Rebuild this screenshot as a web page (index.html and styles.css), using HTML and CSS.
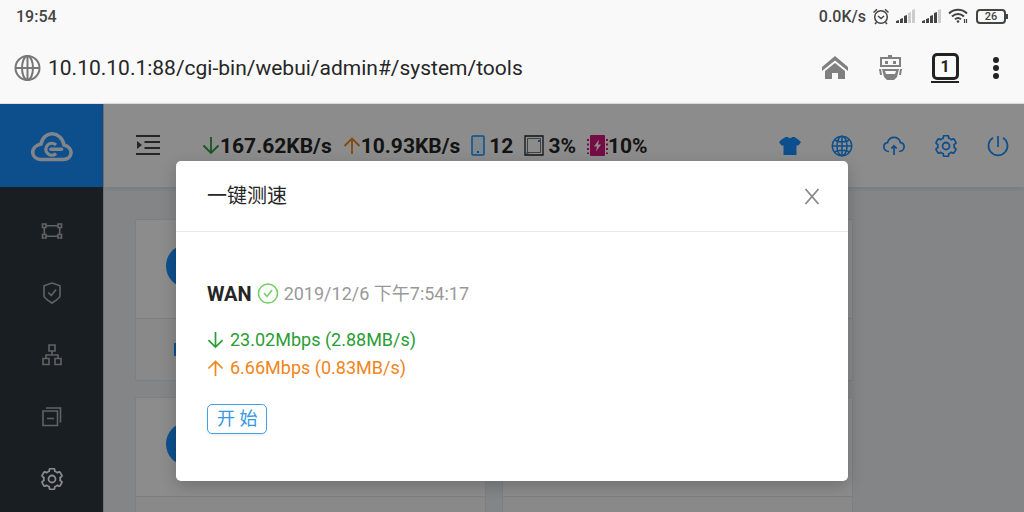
FILE: index.html
```html
<!DOCTYPE html>
<html lang="zh-CN">
  <head>
    <meta charset="UTF-8" />
    <meta name="viewport" content="width=device-width, initial-scale=1.0" />
    <title>一键测速</title>
    <link rel="stylesheet" href="styles.css">
  </head>
  <body>
    <!-- shared icons -->
    <svg class="sprite" aria-hidden="true">
      <symbol id="icon-setting" viewBox="42 42 940 940">
        <path fill="none" stroke="currentColor" stroke-width="76" d="M924.8 625.7l-65.5-56c3.1-19 4.7-38.4 4.7-57.8s-1.6-38.8-4.7-57.8l65.5-56a32 32 0 0 0 9.3-35.2l-.9-2.6a443.7 443.7 0 0 0-79.7-137.9l-1.8-2.1a32.1 32.1 0 0 0-35.1-9.500l-81.3 28.9c-30-24.6-63.5-44-99.7-57.6l-15.7-85a32 32 0 0 0-25.8-25.7l-2.7-.5c-52.1-9.4-106.9-9.4-159 0l-2.7.5a32 32 0 0 0-25.8 25.7l-15.8 85.4a351.9 351.9 0 0 0-99 57.4l-81.9-29.1a32 32 0 0 0-35.1 9.500l-1.8 2.1a446 446 0 0 0-79.7 137.9l-.9 2.6c-4.5 12.5-.8 26.5 9.3 35.2l66.3 56.6c-3.1 18.8-4.6 38-4.6 57.1 0 19.2 1.5 38.4 4.6 57.1L99 625.5a32 32 0 0 0-9.3 35.2l.9 2.6c18.1 50.4 44.9 96.9 79.7 137.9l1.8 2.1a32.1 32.1 0 0 0 35.1 9.500l81.9-29.1c29.8 24.5 63.1 43.9 99 57.4l15.8 85.4a32 32 0 0 0 25.8 25.7l2.7.5a449.4 449.4 0 0 0 159 0l2.7-.5a32 32 0 0 0 25.8-25.7l15.7-85a350 350 0 0 0 99.7-57.6l81.3 28.9a32 32 0 0 0 35.1-9.500l1.8-2.1c34.8-41.1 61.6-87.5 79.7-137.9l.9-2.6c4.5-12.3.8-26.3-9.3-35z" />
        <circle cx="512" cy="512" r="150" fill="none" stroke="currentColor" stroke-width="76" />
      </symbol>
      <symbol id="icon-down" viewBox="0 0 18 18">
        <path fill="none" stroke="currentColor" stroke-width="1.800" d="M9 0v16M1.500 8.500L9 16l7.500-7.500" />
      </symbol>
      <symbol id="icon-up" viewBox="0 0 18 18">
        <path fill="none" stroke="currentColor" stroke-width="1.800" d="M9 17V1.500M1.500 9L9 1.500 16.500 9" />
      </symbol>
    </svg>

    <div class="status-bar">
      <span>19:54</span>
      <div class="status-icons">
        <span>0.0K/s</span>
        <svg width="16" height="17" viewBox="0 0 16 17" fill="none" stroke="currentColor" stroke-width="1.500">
          <circle cx="8" cy="9" r="6.300" />
          <path d="M.5 4.500L4 1.200M15.500 4.500L12 1.200M3.500 14.200L2 16M12.500 14.200L14 16M5 8l3 2.500L11 8" />
        </svg>
        <svg width="19" height="15" viewBox="0 0 19 15">
          <path fill="#444" d="M0 14v-2l3-1v3zM4 14v-4l3-1v5zM8 14V7l3-1v8z" />
          <path fill="#ccc" d="M12 14V4l3-1v11zM16 14V1l3-1v14z" />
        </svg>
        <svg width="19" height="15" viewBox="0 0 19 15">
          <path fill="#444" d="M0 14v-2l3-1v3zM4 14v-4l3-1v5zM8 14V7l3-1v8zM12 14V4l3-1v11z" />
          <path fill="#ccc" d="M16 14V1l3-1v14z" />
        </svg>
        <svg width="21" height="16" viewBox="0 0 21 16" fill="none" stroke="currentColor" stroke-width="2">
          <path d="M1 5.500c5-5 13-5 18 0M4 8.500c3.500-3.500 8.500-3.500 12 0M7 11.300c2-1.700 4-1.700 6 0" />
          <circle cx="10" cy="13.500" r="1.300" fill="currentColor" stroke="none" />
          <path stroke-width="1.200" d="M16.500 11v4M18.500 11v4" />
        </svg>
        <span class="battery">26</span>
      </div>
    </div>

    <div class="address-bar">
      <svg width="28" height="28" viewBox="0 0 28 28" fill="none" stroke="#777" stroke-width="2">
        <circle cx="13.500" cy="14" r="12" />
        <ellipse cx="13.500" cy="14" rx="5.500" ry="12" />
        <path d="M13.500 2v24M1.500 14h24" />
      </svg>
      <span class="url">10.10.10.1:88/cgi-bin/webui/admin#/system/tools</span>
      <div class="browser-actions">
        <button class="browser-button" aria-label="主页">
          <svg width="28" height="26" viewBox="0 0 28 26" fill="#808080">
            <path d="M14 1L27 12v4L14 5.500 1 16v-4z" />
            <path d="M14 8l10 8v8h-7v-6h-6v6H4v-8z" />
          </svg>
        </button>
        <button class="browser-button" aria-label="助手">
          <svg width="28" height="28" viewBox="0 0 28 28" fill="#808080">
            <path fill-rule="evenodd" d="M12 1h4v2h9v10H4V3h8zM6 5v6h17V5z" />
            <path d="M9 7h3v3H9zM17 7h3v3h-3zM3 15h2l1 6H4zM24 15h2l-1 6h-2z" />
            <path fill-rule="evenodd" d="M6 15h17l-2 8-3 3h-7l-3-3zM9 17l1 3h9l1-3z" />
          </svg>
        </button>
        <button class="browser-button tabs" aria-label="标签页"><span>1</span></button>
        <button class="browser-button more" aria-label="菜单">
          <svg width="8" height="28" viewBox="0 0 8 28" fill="#222">
            <circle cx="4" cy="6" r="3" /><circle cx="4" cy="14" r="3" /><circle cx="4" cy="22" r="3" />
          </svg>
        </button>
      </div>
    </div>

    <div class="app">
      <nav class="sidebar">
        <a href="#/" class="logo" aria-label="首页">
          <svg width="42" height="32" viewBox="0 -2 42 32" fill="none" stroke="#ecf1f7">
            <path stroke-width="3.600" d="M10 27.500H32c10 0 11-12 1-14.500C30-1.500 13-2 10 12-1.500 14.500-.5 27 10 27.500z" />
            <path stroke-width="3.200" d="M25 13A6 6 0 1 0 25 21.500" />
            <path stroke-width="3.600" stroke-linecap="round" d="M20 17.300h10.500" />
          </svg>
        </a>
        <div class="menu">
          <a href="#/network" aria-label="网络">
            <svg width="22" height="22" viewBox="0 0 22 22" fill="none" stroke="currentColor" stroke-width="1.600">
              <path d="M1.500 4H5v3.500H1.500zM17 4h3.500v3.500H17zM1.500 14.500H5V18H1.500zM17 14.500h3.500V18H17zM5 5.700h12M5 16.300h12M3.300 7.500v7M18.700 7.500v7" />
            </svg>
          </a>
          <a href="#/security" aria-label="安全">
            <svg width="22" height="22" viewBox="0 0 22 22" fill="none" stroke="currentColor" stroke-width="1.600">
              <path d="M11 1l8 2.700v10.300c0 2-5 5-8 7-3-2-8-5-8-7V3.700zM7.300 10.500l3 3 4.700-6" />
            </svg>
          </a>
          <a href="#/devices" aria-label="设备">
            <svg width="22" height="22" viewBox="0 0 22 22" fill="none" stroke="currentColor" stroke-width="1.600">
              <path d="M8 1h6v6H8zM2 14.500h6v6H2zM14 14.500h6v6h-6zM11 7v4M5 14.500V11h12v3.500" />
            </svg>
          </a>
          <a href="#/services" aria-label="服务">
            <svg width="22" height="22" viewBox="0 0 22 22" fill="none" stroke="currentColor" stroke-width="1.600">
              <path d="M2 5h14.500v14.500H2zM5 2h14.500v14.500M6 12.500h7" />
            </svg>
          </a>
          <a href="#/system" class="active" aria-label="系统">
            <svg width="22" height="22"><use href="#icon-setting" /></svg>
          </a>
        </div>
      </nav>

      <div class="main">
        <header class="header">
          <button class="icon-button toggle" aria-label="展开菜单">
            <svg width="24" height="24" viewBox="0 0 24 24">
              <path stroke="#444" stroke-width="2" d="M0 2h24M8.500 8h15.500M8.500 14h15.500M0 20h24" />
              <path fill="#444" d="M1 7l5 4-5 4z" />
            </svg>
          </button>
          <div class="stats">
            <span class="stat"><svg class="down" width="18" height="18"><use href="#icon-down" /></svg>167.62KB/s</span>
            <span class="stat"><svg class="up" width="18" height="18"><use href="#icon-up" /></svg>10.93KB/s</span>
            <span class="stat phone">
              <svg width="14" height="22" viewBox="0 0 14 22">
                <rect x="1" y="1" width="12" height="19" rx="1" fill="#e6f7ff" stroke="#1890ff" stroke-width="1.500" />
                <path fill="#1890ff" d="M6 16h2v2H6z" />
              </svg>12
            </span>
            <span class="stat cpu">
              <svg width="20" height="21" viewBox="0 0 20 21" fill="none">
                <path stroke="#222" stroke-width="1.300" d="M1 1h18v19H1z" />
                <path stroke="#777" d="M3.500 3.500h13v14h-13z" />
                <path fill="#1890ff" d="M14 5h2v2h-2zM2.500 17h2v2h-2z" />
              </svg>3%
            </span>
            <span class="stat memory">
              <svg width="21" height="22" viewBox="0 0 21 22">
                <path stroke="#d6187f" stroke-width="2" stroke-dasharray="2 2.500" d="M1 4v15M20 4v15" />
                <rect x="3" width="15" height="21" rx="1" fill="#d6187f" />
                <path fill="#fff" d="M12 4.500L7 11.500h3L9 16.500l5-7h-3z" />
              </svg>10%
            </span>
          </div>
          <div class="header-actions">
            <button class="icon-button" aria-label="主题">
              <svg width="22" height="22" viewBox="0 0 22 22" fill="currentColor">
                <path d="M6.500 2h2.300c1 1.500 3.400 1.500 4.400 0h2.300c.5 0 5.500 4 6 4.500s.4 1 0 1.500l-2.200 2.500H17.500v9.500h-13V10.500H2.700L.5 8c-.4-.5-.4-1 0-1.500S6 2 6.500 2z" />
              </svg>
            </button>
            <button class="icon-button" aria-label="语言">
              <svg width="22" height="22" viewBox="0 0 22 22" fill="none" stroke="currentColor" stroke-width="1.500">
                <circle cx="11" cy="11" r="9.800" /><ellipse cx="11" cy="11" rx="5" ry="9.800" />
                <path d="M11 1v20M1 11h20M3.500 5c4 2.500 11 2.500 15 0M3.500 17c4-2.500 11-2.500 15 0" />
              </svg>
            </button>
            <button class="icon-button" aria-label="升级">
              <svg width="22" height="22" viewBox="0 0 22 22" fill="none" stroke="currentColor" stroke-width="1.700">
                <path d="M6 16.500C-.5 16-.5 8.500 4.500 7.700c2-7 11-7 13 0 5 .8 5 8.300-1.500 8.800M11 20v-8.500M8.300 13.500L11 10.800l2.700 2.700" />
              </svg>
            </button>
            <button class="icon-button" aria-label="设置">
              <svg width="22" height="22"><use href="#icon-setting" /></svg>
            </button>
            <button class="icon-button" aria-label="退出">
              <svg width="22" height="22" viewBox="0 0 22 22" fill="none" stroke="currentColor" stroke-width="1.700">
                <path d="M6 2.800a9.500 9.500 0 1 0 10 0M11 1v11" />
              </svg>
            </button>
          </div>
        </header>

        <div class="cards">
          <div class="card">
            <div class="card-body"><span class="avatar"></span></div>
            <div class="card-footer"><span class="card-mark"></span></div>
          </div>
          <div class="card">
            <div class="card-body"><span class="avatar"></span></div>
            <div class="card-footer"></div>
          </div>
          <div class="card">
            <div class="card-body"><span class="avatar"></span></div>
            <div class="card-footer"></div>
          </div>
          <div class="card">
            <div class="card-body"><span class="avatar"></span></div>
            <div class="card-footer"></div>
          </div>
        </div>
      </div>

      <div class="mask">
        <div class="modal" role="dialog" aria-labelledby="modalTitle">
          <div class="modal-header">
            <h1 id="modalTitle">一键测速</h1>
            <button class="icon-button close" aria-label="关闭">
              <svg width="16" height="18" viewBox="0 0 16 18" fill="none" stroke="currentColor" stroke-width="1.800">
                <path d="M1.500 2l13 15M14.500 2l-13 15" />
              </svg>
            </button>
          </div>
          <div class="modal-body">
            <div class="wan">
              <strong>WAN</strong>
              <svg width="22" height="22" viewBox="0 0 22 22" fill="none" stroke="#73d166" stroke-width="1.600">
                <circle cx="11" cy="10.500" r="9.500" />
                <path d="M7 10l3 3.500 5-6.500" />
              </svg>
              <time>2019/12/6 下午7:54:17</time>
            </div>
            <div class="speeds">
              <div class="speed down"><svg width="17" height="17"><use href="#icon-down" /></svg>23.02Mbps (2.88MB/s)</div>
              <div class="speed up"><svg width="17" height="17"><use href="#icon-up" /></svg>6.66Mbps (0.83MB/s)</div>
            </div>
            <button class="start">开 始</button>
          </div>
        </div>
      </div>
    </div>
  </body>
</html>
```
FILE: styles.css
```css
* {
  margin: 0;
  padding: 0;
  box-sizing: border-box;
}

body {
  height: 100vh;
  display: flex;
  flex-direction: column;
  background: #f9f9f9;
  color: #262626;
  font-family: Roboto, "Noto Sans CJK SC", sans-serif;
}

button {
  border: none;
  background: none;
  font-family: inherit;
  cursor: pointer;
}

svg {
  display: block;
  flex-shrink: 0;
}

.sprite {
  position: absolute;
  width: 0;
  height: 0;
}

/* phone status bar */
.status-bar {
  display: flex;
  justify-content: space-between;
  align-items: center;
  height: 32px;
  padding: 0 18px 0 16px;
  color: #444;
  font-size: 16px;
  font-weight: 500;
}

.status-icons {
  display: flex;
  align-items: center;
  gap: 7px;
}

.battery {
  position: relative;
  width: 30px;
  height: 15px;
  border: 2px solid #444;
  border-radius: 4px;
  font-size: 11px;
  line-height: 11px;
  text-align: center;
}

.battery::after {
  content: "";
  position: absolute;
  top: 3px;
  right: -4px;
  width: 2px;
  height: 5px;
  background: #444;
}

/* browser address bar */
.address-bar {
  display: flex;
  align-items: center;
  height: 72px;
  padding: 0 18px 0 14px;
  border-bottom: 1px solid #e0e0e0;
}

.url {
  margin-left: 6px;
  font-size: 21px;
  line-height: 28px;
}

.browser-actions {
  display: flex;
  gap: 27px;
  margin-left: auto;
}

.browser-button {
  display: flex;
  align-items: center;
  justify-content: center;
  width: 28px;
  height: 30px;
}

.browser-button.more {
  width: 20px;
}

.browser-button.tabs {
  align-items: flex-start;
  border-bottom: 2px solid #222;
}

.tabs span {
  width: 27px;
  height: 27px;
  border: 3px solid #222;
  border-radius: 5px;
  color: #222;
  font-size: 16px;
  font-weight: 700;
  line-height: 21px;
}

/* router admin */
.app {
  position: relative;
  flex: 1;
  display: flex;
  min-height: 0;
  background: #f0f2f5;
}

.sidebar {
  width: 103px;
  flex-shrink: 0;
  background: #2f383f;
  overflow: hidden;
}

.logo {
  display: flex;
  align-items: center;
  justify-content: center;
  height: 83px;
  background: #1890ff;
}

.menu {
  padding-top: 13px;
}

.menu a {
  display: flex;
  align-items: center;
  justify-content: center;
  height: 62px;
  color: #b0b3b5;
}

.menu a.active {
  color: #fff;
}

.main {
  flex: 1;
  display: flex;
  flex-direction: column;
  border-left: 1px solid #d0d0d0;
}

.header {
  position: relative;
  display: flex;
  align-items: center;
  flex-shrink: 0;
  height: 83px;
  padding: 0 15px 0 32px;
  background: #fff;
  box-shadow: 0 1px 5px rgba(0, 21, 41, 0.12);
}

.icon-button {
  display: flex;
  align-items: center;
  color: #1890ff;
}

.stats {
  display: flex;
  gap: 11px;
  margin-left: 42px;
  font-size: 21px;
  font-weight: 700;
}

.stat {
  display: flex;
  align-items: center;
}

.phone,
.cpu {
  gap: 4px;
}

.down {
  color: #2a9d35;
}

.up {
  color: #f08519;
}

.header-actions {
  display: flex;
  gap: 30px;
  margin-left: auto;
}

.cards {
  flex: 1;
  min-height: 0;
  display: grid;
  grid-template-columns: 351px 351px;
  align-content: start;
  gap: 16px;
  padding: 32px 31px 0;
  overflow-y: auto;
  scrollbar-width: none;
}

.card {
  border: 1px solid #e8e8e8;
  background: #fff;
}

.card-body {
  height: 98px;
  padding: 24px 30px;
}

.avatar {
  display: block;
  width: 44px;
  height: 44px;
  border-radius: 50%;
  background: #1890ff;
}

.card-footer {
  height: 62px;
  padding: 24px 38px;
  border-top: 1px solid #e8e8e8;
  background: #fafafa;
}

.card-mark {
  display: block;
  width: 12px;
  height: 13px;
  background: #1890ff;
}

/* speed test dialog */
.mask {
  position: absolute;
  inset: 0;
  padding: 57px 16px 0;
  background: rgba(0, 0, 0, 0.45);
}

.modal {
  max-width: 672px;
  margin: 0 auto;
  border-radius: 5px;
  background: #fff;
  box-shadow: 0 5px 16px rgba(0, 0, 0, 0.2);
}

.modal-header {
  display: flex;
  align-items: center;
  justify-content: space-between;
  padding: 20px 28px 20px 31px;
  border-bottom: 1px solid #e8e8e8;
}

.modal-header h1 {
  font-size: 20px;
  font-weight: 400;
  line-height: 30px;
}

.close {
  color: #888;
}

.modal-body {
  padding: 48px 31px 47px;
  font-size: 18px;
  line-height: 28px;
}

.wan {
  display: flex;
  align-items: center;
  gap: 5px;
}

.wan strong {
  font-size: 20px;
  font-weight: 700;
}

.wan time {
  color: #999;
}

.speeds {
  margin: 18px 0 22px;
}

.speed {
  display: flex;
  align-items: center;
  gap: 6px;
}

.start {
  display: block;
  height: 30px;
  padding: 0 9px;
  border: 1px solid #40a0e8;
  border-radius: 5px;
  color: #3498e0;
  font-size: 18px;
  line-height: 28px;
  box-shadow: 0 2px 2px rgba(0, 0, 0, 0.06);
}
```
